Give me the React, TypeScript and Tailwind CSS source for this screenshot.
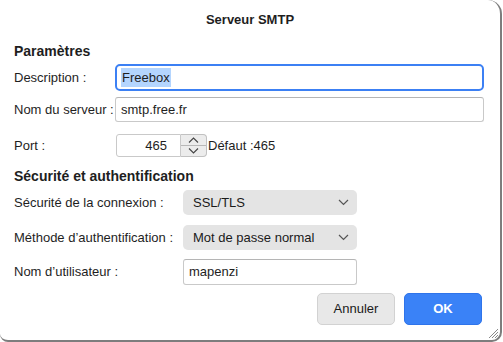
import React from 'react';

const Chevron: React.FC = () => (
    <svg width="11" height="7" viewBox="0 0 11 7" fill="none">
        <path d="M1 1l4.5 4.5L10 1" stroke="#555" strokeWidth="1.2" />
    </svg>
);

const Select: React.FC<{ value: string }> = ({ value }) => (
    <div className="w-[174px] h-[25px] bg-[#e4e4e4] rounded-[5px] flex items-center justify-between pl-[10px] pr-[8px] text-[#1a1a1a]">
        <span>{value}</span>
        <Chevron />
    </div>
);

const App: React.FC = () => {
    return (
        <div className="w-[503px] h-[342px] bg-white relative overflow-hidden text-[13px] text-[#1e1e1e]" style={{ fontFamily: '"Liberation Sans", Arial, sans-serif' }}>
            <div className="w-[502px] h-[342px] border-r-2 border-b-2 border-[#7d7d7d] rounded-tr-[14px] rounded-br-[10px] rounded-bl-[8px] flex flex-col px-[14px] pt-[12px]">
                <div className="h-[16px] text-center font-bold leading-[16px] text-[13px]">Serveur SMTP</div>

                <div className="mt-[15px] h-[16px] leading-[16px] font-bold text-[14px]">Paramètres</div>

                <div className="mt-[5px] flex items-center h-[27px]">
                    <span className="w-[101px]">Description :</span>
                    <div className="w-[369px] h-[27px] border-2 border-[#3c80f4] rounded-[5px] flex items-center pl-[4px]">
                        <span className="bg-[#b4d5fe] px-[1px] leading-[19px]">Freebox</span>
                    </div>
                </div>

                <div className="mt-[6px] flex items-center h-[25px]">
                    <span className="w-[101px]">Nom du serveur :</span>
                    <div className="w-[369px] h-[25px] border border-[#c9c9c9] border-t-[#b5b5b5] rounded-[3px] flex items-center pl-[5px]">
                        smtp.free.fr
                    </div>
                </div>

                <div className="mt-[12px] flex items-center h-[23px]">
                    <span className="w-[102px]">Port :</span>
                    <div className="w-[65px] h-[23px] border border-[#c9c9c9] rounded-l-[3px] flex items-center justify-end pr-[13px]">
                        465
                    </div>
                    <div className="w-[26px] h-[23px] border border-l-0 border-[#c1c1c1] rounded-r-[4px] bg-[#ececec] flex flex-col">
                        <div className="flex-1 flex items-center justify-center border-b border-[#b8b8b8]">
                            <svg width="11" height="6" viewBox="0 0 11 6" fill="none">
                                <path d="M1 5.5L5.5 1L10 5.5" stroke="#444" strokeWidth="1.1" />
                            </svg>
                        </div>
                        <div className="flex-1 flex items-center justify-center">
                            <svg width="11" height="6" viewBox="0 0 11 6" fill="none">
                                <path d="M1 0.5L5.5 5L10 0.5" stroke="#444" strokeWidth="1.1" />
                            </svg>
                        </div>
                    </div>
                    <span className="ml-[1px]">Défaut :465</span>
                </div>

                <div className="mt-[11px] h-[16px] leading-[16px] font-bold text-[14px]">Sécurité et authentification</div>

                <div className="mt-[6px] flex items-center h-[25px]">
                    <span className="w-[169px]">Sécurité de la connexion :</span>
                    <Select value="SSL/TLS" />
                </div>

                <div className="mt-[10px] flex items-center h-[25px]">
                    <span className="w-[169px]">Méthode d’authentification :</span>
                    <Select value="Mot de passe normal" />
                </div>

                <div className="mt-[9px] flex items-center h-[26px]">
                    <span className="w-[169px]">Nom d’utilisateur :</span>
                    <div className="w-[174px] h-[26px] border border-[#c9c9c9] border-t-[#b5b5b5] rounded-[3px] flex items-center pl-[5px]">
                        mapenzi
                    </div>
                </div>

                <div className="mt-[8px] flex justify-end gap-[9px] pr-[4px]">
                    <button className="w-[78px] h-[32px] bg-[#e8e8e8] border border-[#d2d2d2] rounded-[5px] text-[13px] font-medium text-[#1a1a1a]">
                        Annuler
                    </button>
                    <button className="w-[78px] h-[32px] bg-[#3a82f7] border border-[#2f74ea] rounded-[5px] text-[13px] font-bold text-white">
                        OK
                    </button>
                </div>
            </div>

            <svg className="absolute right-[4px] bottom-[3px]" width="11" height="11" viewBox="0 0 11 11">
                <path d="M1 10L10 1M4 10L10 4M7 10L10 7" stroke="#8a8a8a" strokeWidth="1" />
            </svg>
        </div>
    );
};

export default App;
